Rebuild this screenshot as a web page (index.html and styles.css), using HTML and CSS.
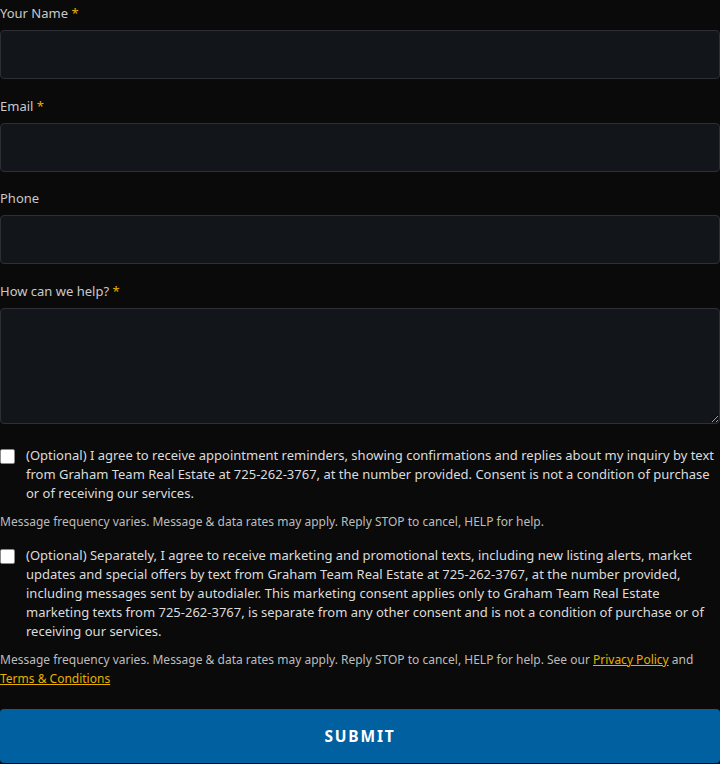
FILE: index.html
```html
<!DOCTYPE html>
<html lang="en">
<head>
<meta charset="utf-8">
<title>Contact</title>
<link rel="stylesheet" href="styles.css">
</head>
<body>
<form class="form">
  <div class="field">
    <label class="label">Your Name <span class="req">*</span></label>
    <input class="input" type="text">
  </div>
  <div class="field">
    <label class="label">Email <span class="req">*</span></label>
    <input class="input" type="email">
  </div>
  <div class="field">
    <label class="label">Phone</label>
    <input class="input" type="tel">
  </div>
  <div class="field field-last">
    <label class="label">How can we help? <span class="req">*</span></label>
    <textarea class="input textarea"></textarea>
  </div>
  <label class="consent">
    <span class="box"></span>
    <span class="consent-text">(Optional) I agree to receive appointment reminders, showing confirmations and replies about my inquiry by text from Graham Team Real Estate at 725-262-3767, at the number provided. Consent is not a condition of purchase or of receiving our services.</span>
  </label>
  <p class="note">Message frequency varies. Message &amp; data rates may apply. Reply STOP to cancel, HELP for help.</p>
  <label class="consent">
    <span class="box"></span>
    <span class="consent-text">(Optional) Separately, I agree to receive marketing and promotional texts, including new listing alerts, market updates and special offers by text from Graham Team Real Estate at 725-262-3767, at the number provided, including messages sent by autodialer. This marketing consent applies only to Graham Team Real Estate marketing texts from 725-262-3767, is separate from any other consent and is not a condition of purchase or of receiving our services.</span>
  </label>
  <p class="note">Message frequency varies. Message &amp; data rates may apply. Reply STOP to cancel, HELP for help. See our <a href="#" class="link">Privacy Policy</a> and <a href="#" class="link">Terms &amp; Conditions</a></p>
  <button type="button" class="submit">SUBMIT</button>
</form>
</body>
</html>
```

FILE: styles.css
```css
html, body {
  margin: 0;
  padding: 0;
  background: #0a0a0a;
}
body {
  font-family: "Noto Sans", "Open Sans", sans-serif;
  color: #d4d4d4;
}
.form {
  display: flex;
  flex-direction: column;
  padding-top: 3px;
}
.field {
  display: flex;
  flex-direction: column;
  margin-bottom: 16.6px;
}
.label {
  font-size: 13px;
  line-height: 20px;
  color: #c9c9c9;
  margin-bottom: 7px;
}
.req {
  color: #e5b000;
}
.input {
  box-sizing: border-box;
  width: 100%;
  height: 49px;
  background: #12151a;
  border: 1px solid #2c2f34;
  border-radius: 4px;
  margin: 0;
  color: #ddd;
  font-family: inherit;
}
.textarea {
  height: 116px;
  resize: vertical;
}
.field-last {
  margin-bottom: 22px;
}
.consent {
  display: flex;
  gap: 11px;
  align-items: flex-start;
}
.box {
  flex: none;
  width: 15px;
  height: 15px;
  margin-top: 3px;
  background: #ffffff;
  border: 1px solid #8a8a8a;
  border-radius: 2px;
  box-sizing: border-box;
}
.consent-text {
  font-size: 13px;
  line-height: 19px;
  color: #dcdcdc;
}
.note {
  font-size: 12px;
  line-height: 19px;
  color: #bdbdbd;
  margin: 9px 0 15px;
}
.link {
  color: #e5b000;
}
.submit {
  margin-top: 6px;
  height: 54px;
  width: 100%;
  background: #0060a0;
  color: #fff;
  border: none;
  border-radius: 4px;
  font-family: inherit;
  font-size: 15.5px;
  font-weight: 700;
  letter-spacing: 1.8px;
}
```
